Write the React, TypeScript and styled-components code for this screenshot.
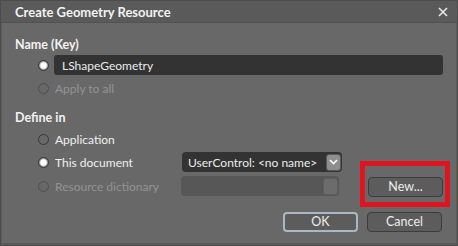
import React, { FC } from "react";
import styled, { createGlobalStyle } from "styled-components";

const GlobalStyle = createGlobalStyle`
  html, body {
    margin: 0;
    padding: 0;
    background: #5a5a5a;
  }
  body {
    font-family: Lato, "Open Sans", sans-serif;
  }
`;

const FONT = `Lato, "Open Sans", sans-serif`;

const Window = styled.div`
  width: 458px;
  height: 246px;
  box-sizing: border-box;
  display: flex;
  flex-direction: column;
  background: #5a5a5a;
  border: 1px solid #4c4c4c;
`;

const TitleBar = styled.div`
  height: 21px;
  display: flex;
  align-items: center;
  justify-content: space-between;
  padding: 0 9px 0 14px;
  border-bottom: 1px solid #525252;
`;

const Title = styled.span`
  font-family: ${FONT};
  font-weight: 700;
  font-size: 13px;
  color: #f2f2f2;
`;

const Body = styled.div`
  flex: 1;
  margin: 0 1px 2px 1px;
  background: #686868;
  padding: 14px 13px 0 13px;
  display: flex;
  flex-direction: column;
`;

const SectionLabel = styled.div<{ $mt?: number }>`
  height: 16px;
  line-height: 16px;
  margin-top: ${(p) => p.$mt ?? 0}px;
  font-family: ${FONT};
  font-weight: 700;
  font-size: 12.5px;
  color: #f2f2f2;
`;

const Row = styled.div<{ $mt?: number }>`
  height: 20px;
  margin-top: ${(p) => p.$mt ?? 0}px;
  display: flex;
  align-items: center;
  padding-left: 23px;
`;

const RadioCircle = styled.span<{ $checked?: boolean; $disabled?: boolean }>`
  width: 11px;
  height: 11px;
  box-sizing: border-box;
  border-radius: 50%;
  border: 1px solid ${(p) => (p.$disabled ? "#4f4f4f" : "#383838")};
  background: ${(p) =>
    p.$checked
      ? "radial-gradient(circle, #ffffff 0 2.8px, #c4c4c4 3.4px, #8a8a8a 4.4px)"
      : "transparent"};
  flex-shrink: 0;
`;

const RadioText = styled.span<{ $disabled?: boolean }>`
  margin-left: 6px;
  font-family: ${FONT};
  font-size: 12px;
  color: ${(p) => (p.$disabled ? "#939393" : "#f0f0f0")};
  white-space: nowrap;
`;

const RadioLabel = styled.div`
  width: 144px;
  display: flex;
  align-items: center;
`;

const TextBox = styled.div`
  margin-left: 5px;
  flex: 1;
  height: 20px;
  box-sizing: border-box;
  background: #333333;
  border-radius: 3px;
  padding-left: 8px;
  display: flex;
  align-items: center;
  font-family: ${FONT};
  font-size: 12px;
  color: #ececec;
`;

const Select = styled.div<{ $disabled?: boolean }>`
  width: 160px;
  height: 20px;
  box-sizing: border-box;
  border-radius: 4px;
  background: ${(p) => (p.$disabled ? "#575757" : "#333333")};
  display: flex;
  align-items: center;
  justify-content: space-between;
  padding: 0 1px 0 6px;
  font-family: ${FONT};
  font-size: 12px;
  color: #ececec;
`;

const Chevron = styled.span<{ $disabled?: boolean }>`
  width: 15px;
  height: 17px;
  box-sizing: border-box;
  border-radius: 3px;
  border: 1px solid ${(p) => (p.$disabled ? "#5e5e5e" : "#5a5a5a")};
  background: ${(p) => (p.$disabled ? "#6c6c6c" : "#8e8e8e")};
  display: flex;
  align-items: center;
  justify-content: center;
`;

const Button = styled.button<{ $default?: boolean }>`
  width: 75px;
  height: 20px;
  box-sizing: border-box;
  border-radius: 4px;
  border: ${(p) => (p.$default ? "2px solid #a9b7c6" : "1px solid #3c3c3c")};
  background: #5c5c5c;
  font-family: ${FONT};
  font-size: 12.5px;
  color: #ededed;
  padding: 0;
  line-height: 1;
`;

const Highlight = styled.div`
  position: relative;
  margin-left: 29px;

  &::after {
    content: "";
    position: absolute;
    top: -14px;
    bottom: -10px;
    left: -8px;
    right: -7px;
    border: 5px solid #e0141e;
  }
`;

const Footer = styled.div`
  display: flex;
  justify-content: flex-end;
  gap: 9px;
  margin-top: 16px;
  padding-right: 1px;
`;

const CloseIcon: FC = () => (
  <svg width="10" height="10" viewBox="0 0 10 10">
    <path d="M1 1L9 9M9 1L1 9" stroke="#e8e8e8" strokeWidth="1.6" />
  </svg>
);

const ChevronIcon: FC = () => (
  <svg width="9" height="6" viewBox="0 0 9 6">
    <path d="M1 1L4.5 4.5L8 1" stroke="#ffffff" strokeWidth="1.6" fill="none" />
  </svg>
);

const Radio: FC<{ label: string; checked?: boolean; disabled?: boolean }> = ({
  label,
  checked,
  disabled,
}) => (
  <RadioLabel>
    <RadioCircle $checked={checked} $disabled={disabled} />
    <RadioText $disabled={disabled}>{label}</RadioText>
  </RadioLabel>
);

const App: FC = () => (
  <>
    <GlobalStyle />
    <Window>
      <TitleBar>
        <Title>Create Geometry Resource</Title>
        <CloseIcon />
      </TitleBar>
      <Body>
        <SectionLabel>Name (Key)</SectionLabel>
        <Row $mt={2}>
          <RadioCircle $checked />
          <TextBox>LShapeGeometry</TextBox>
        </Row>
        <Row $mt={3}>
          <Radio label="Apply to all" disabled />
        </Row>
        <SectionLabel $mt={12}>Define in</SectionLabel>
        <Row $mt={3}>
          <Radio label="Application" />
        </Row>
        <Row $mt={3}>
          <Radio label="This document" checked />
          <Select>
            <span>UserControl: &lt;no name&gt;</span>
            <Chevron>
              <ChevronIcon />
            </Chevron>
          </Select>
        </Row>
        <Row $mt={4}>
          <Radio label="Resource dictionary" disabled />
          <Select $disabled>
            <span />
            <Chevron $disabled />
          </Select>
          <Highlight>
            <Button>New...</Button>
          </Highlight>
        </Row>
        <Footer>
          <Button $default>OK</Button>
          <Button>Cancel</Button>
        </Footer>
      </Body>
    </Window>
  </>
);

export default App;
